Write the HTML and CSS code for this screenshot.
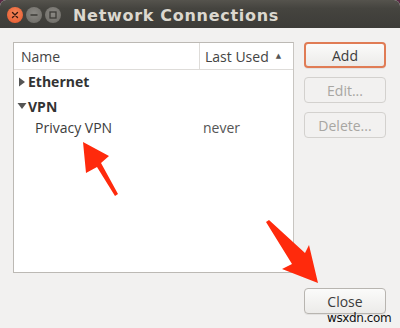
FILE: index.html
```html
<!DOCTYPE html>
<html>
<head>
<meta charset="utf-8">
<link rel="stylesheet" href="styles.css">
</head>
<body>
<div class="window">
  <div class="titlebar">
    <div class="controls">
      <span class="wbtn close-w"><svg width="16" height="16" viewBox="0 0 16 16"><path d="M5.5 5.5 L10.5 10.5 M10.5 5.5 L5.5 10.5" stroke="#3a1a10" stroke-width="1.4" stroke-linecap="round"/></svg></span>
      <span class="wbtn"><svg width="16" height="16" viewBox="0 0 16 16"><path d="M4.5 8 H11.5" stroke="#3c3b37" stroke-width="1.4"/></svg></span>
      <span class="wbtn"><svg width="16" height="16" viewBox="0 0 16 16"><rect x="5" y="5" width="6" height="6" fill="none" stroke="#3c3b37" stroke-width="1.3"/></svg></span>
    </div>
    <div class="title">Network Connections</div>
  </div>
  <div class="content">
    <div class="tree">
      <div class="thead">
        <div class="th name">Name</div>
        <div class="th used">Last Used <span class="sort">▲</span></div>
      </div>
      <div class="row">
        <div class="cell name group"><span class="exp"><svg width="8" height="10" viewBox="0 0 8 10"><path d="M1 0.5 L7 5 L1 9.5 Z" fill="#555"/></svg></span>Ethernet</div>
      </div>
      <div class="row vpn">
        <div class="cell name group"><span class="exp"><svg width="10" height="8" viewBox="0 0 10 8"><path d="M0.5 1 L9.5 1 L5 7 Z" fill="#555"/></svg></span>VPN</div>
      </div>
      <div class="row">
        <div class="cell name child">Privacy VPN</div>
        <div class="cell used">never</div>
      </div>
    </div>
    <div class="side">
      <button class="btn focus">Add</button>
      <button class="btn disabled">Edit...</button>
      <button class="btn disabled">Delete...</button>
    </div>
    <div class="footer">
      <button class="btn">Close</button>
    </div>
  </div>
  <svg class="arrows" width="400" height="328" viewBox="0 0 400 328">
    <path d="M83 142 L109 156 L101 163 L118 194 L115 196 L97 167 L86 173 Z" fill="#ff2a0c"/>
    <path d="M266 222 L269 220 L305 253 L309 245 L318 283 L282 269 L292 264 Z" fill="#ff2a0c"/>
  </svg>
  <div class="watermark">wsxdn.com</div>
</div>
</body>
</html>
```
FILE: styles.css
```css
* { box-sizing: border-box; }
html, body { margin: 0; padding: 0; }
body {
  width: 400px;
  height: 328px;
  overflow: hidden;
  background: #5a2a45;
  font-family: "Open Sans", "DejaVu Sans", sans-serif;
}
.window {
  position: relative;
  width: 400px;
  height: 328px;
  background: #f2f1f0;
  border-radius: 6px 6px 0 0;
  overflow: hidden;
}
.titlebar {
  height: 28px;
  background: linear-gradient(#55534d, #45443f 30%, #3d3c38);
  display: flex;
  align-items: center;
  padding-left: 7px;
}
.controls { display: flex; gap: 3px; margin-top: 2px; }
.wbtn {
  width: 16px;
  height: 16px;
  border-radius: 50%;
  background: radial-gradient(circle at 50% 40%, #8a8883, #6b6964);
  display: flex;
  align-items: center;
  justify-content: center;
}
.wbtn.close-w { background: radial-gradient(circle at 50% 40%, #f58a5c, #e5542a); }
.title {
  margin-left: 12px;
  margin-top: 2px;
  color: #dcd8cf;
  font-family: "DejaVu Sans", sans-serif;
  font-weight: 700;
  font-size: 16px;
  letter-spacing: 0.7px;
}
.content {
  display: grid;
  grid-template-columns: 281px 82px;
  column-gap: 10px;
  padding: 14px 0 0 13px;
}
.tree {
  height: 231px;
  background: #fff;
  border: 1px solid #bcb9b4;
  border-right-color: #c8c5c1;
  color: #3c3c3c;
  font-size: 14px;
}
.thead {
  display: flex;
  height: 27px;
  border-bottom: 1px solid #dedcd9;
  align-items: stretch;
}
.th { display: flex; align-items: center; color: #444; }
.th.name { width: 186px; padding-left: 7px; border-right: 1px solid #dedcd9; }
.th.used { flex: 1; padding-left: 5px; }
.sort { font-size: 7px; margin-left: 7px; margin-top: -2px; color: #555; }
.row { display: flex; height: 23px; align-items: center; }
.row.vpn { padding-top: 3px; }
.cell.name { width: 186px; display: flex; align-items: center; }
.cell.group { font-weight: 700; color: #333; padding-left: 1px; }
.exp { width: 13px; display: flex; align-items: center; justify-content: center; }
.cell.child { padding-left: 21px; }
.cell.used { padding-left: 3px; color: #555; }
.side { display: flex; flex-direction: column; gap: 9px; }
.btn {
  height: 26px;
  width: 82px;
  font-family: inherit;
  font-size: 14px;
  color: #3c3c3c;
  background: linear-gradient(#fbfbfa, #ecebe9);
  border: 1px solid #b8b5b0;
  border-radius: 4px;
  padding: 0;
  box-shadow: 0 1px 0 rgba(0,0,0,0.06);
}
.btn.focus { border: 2px solid #e07c55; }
.btn.disabled {
  color: #a8a6a2;
  background: #f2f1f0;
  border-color: #d3d1ce;
  box-shadow: none;
}
.footer {
  grid-column: 1 / 3;
  display: flex;
  justify-content: flex-end;
  margin-top: 15px;
}
.arrows { position: absolute; left: 0; top: 0; pointer-events: none; }
.watermark {
  position: absolute;
  left: 327px;
  top: 311px;
  font-family: "DejaVu Sans", sans-serif;
  font-size: 12px;
  line-height: 14px;
  color: #111;
  letter-spacing: -0.4px;
}
```
